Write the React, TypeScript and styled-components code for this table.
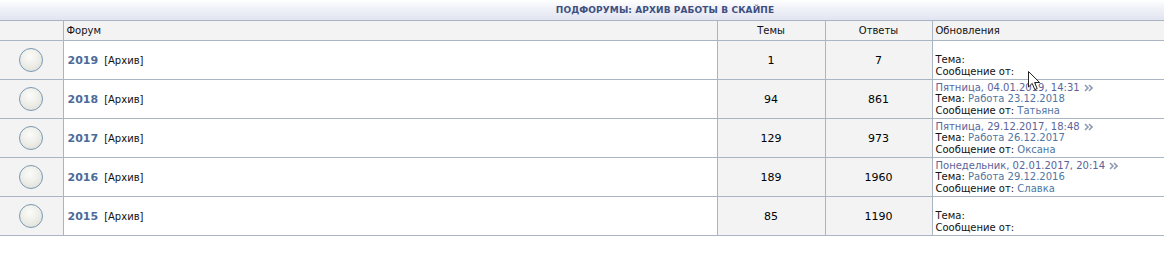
import React from 'react';
import styled, { createGlobalStyle } from 'styled-components';

const GlobalStyle = createGlobalStyle`
  html, body {
    margin: 0;
    padding: 0;
    background: #ffffff;
    overflow: hidden;
  }
  body {
    font-family: 'DejaVu Sans', Verdana, sans-serif;
    font-size: 10px;
    color: #000;
  }
`;

const Page = styled.div`
  position: relative;
  width: 1330px;
`;

const ForumTable = styled.table`
  width: 1330px;
  border-collapse: collapse;
  table-layout: fixed;
`;

const TitleCell = styled.th`
  height: 20px;
  padding: 0;
  background: linear-gradient(to bottom, #ffffff 0%, #f1f2f8 40%, #e1e4f1 100%);
  border-bottom: 1px solid #a9b5c3;
  color: #3e4f80;
  font-size: 9px;
  font-weight: bold;
  text-transform: uppercase;
  text-align: center;
  letter-spacing: 0.1px;
`;

const HeadCell = styled.th<{ $align?: string; $first?: boolean }>`
  height: 19px;
  padding: 0 3px;
  background: #f3f3f3;
  border: 1px solid #a9b5c3;
  border-left: ${({ $first }) => ($first ? 'none' : '1px solid #a9b5c3')};
  border-right: none;
  font-weight: normal;
  font-size: 10px;
  text-align: ${({ $align }) => $align || 'left'};
  color: #111;
`;

const Cell = styled.td<{ $alt?: boolean; $align?: string; $first?: boolean }>`
  height: 38px;
  padding: 0 3px;
  background: ${({ $alt }) => ($alt ? '#f3f3f3' : '#ffffff')};
  border: 1px solid #a9b5c3;
  border-left: ${({ $first }) => ($first ? 'none' : '1px solid #a9b5c3')};
  border-right: none;
  text-align: ${({ $align }) => $align || 'left'};
  vertical-align: middle;
  font-size: 11px;
`;

const StatusIcon = styled.span`
  display: inline-block;
  width: 22px;
  height: 22px;
  border-radius: 50%;
  border: 1px solid #7b99b3;
  background: radial-gradient(circle at 45% 35%, #fbfbf8 0%, #ecece7 55%, #d9d9d3 100%);
  vertical-align: middle;
`;

const YearLink = styled.a`
  color: #4b6b9a;
  font-weight: bold;
  font-size: 11px;
  text-decoration: none;
  margin-left: 1px;
`;

const Archive = styled.span`
  font-size: 10px;
  margin-left: 6px;
  color: #111;
`;

const Updates = styled.div`
  font-size: 10px;
  line-height: 11.5px;
  color: #111;
`;

const DateLink = styled.span`
  color: #5b639a;
`;

const Value = styled.span`
  color: #5076a2;
`;

const Empty = styled.div`
  height: 11.5px;
`;

const Arrow = styled.svg`
  margin-left: 4px;
  vertical-align: -1px;
`;

const Cursor = styled.svg`
  position: absolute;
  left: 1028px;
  top: 71px;
`;

type Row = {
  year: string;
  topics: number;
  replies: number;
  date?: string;
  topic?: string;
  author?: string;
};

const rows: Row[] = [
  { year: '2019', topics: 1, replies: 7 },
  { year: '2018', topics: 94, replies: 861, date: 'Пятница, 04.01.2019, 14:31', topic: 'Работа 23.12.2018', author: 'Татьяна' },
  { year: '2017', topics: 129, replies: 973, date: 'Пятница, 29.12.2017, 18:48', topic: 'Работа 26.12.2017', author: 'Оксана' },
  { year: '2016', topics: 189, replies: 1960, date: 'Понедельник, 02.01.2017, 20:14', topic: 'Работа 29.12.2016', author: 'Славка' },
  { year: '2015', topics: 85, replies: 1190 },
];

const DoubleArrow = () => (
  <Arrow width="9" height="8" viewBox="0 0 9 8">
    <path d="M1 1 L4 4 L1 7" fill="none" stroke="#8d9bb3" strokeWidth="1.6" />
    <path d="M5 1 L8 4 L5 7" fill="none" stroke="#8d9bb3" strokeWidth="1.6" />
  </Arrow>
);

const App: React.FC = () => {
  return (
    <Page>
      <GlobalStyle />
      <ForumTable>
        <colgroup>
          <col style={{ width: '63px' }} />
          <col style={{ width: '654px' }} />
          <col style={{ width: '108px' }} />
          <col style={{ width: '107px' }} />
          <col />
        </colgroup>
        <thead>
          <tr>
            <TitleCell colSpan={5}>Подфорумы: Архив работы в скайпе</TitleCell>
          </tr>
          <tr>
            <HeadCell $first />
            <HeadCell>Форум</HeadCell>
            <HeadCell $align="center">Темы</HeadCell>
            <HeadCell $align="center">Ответы</HeadCell>
            <HeadCell>Обновления</HeadCell>
          </tr>
        </thead>
        <tbody>
          {rows.map((r) => (
            <tr key={r.year}>
              <Cell $alt $first $align="center">
                <StatusIcon />
              </Cell>
              <Cell>
                <YearLink href="#">{r.year}</YearLink>
                <Archive>[Архив]</Archive>
              </Cell>
              <Cell $alt $align="center">{r.topics}</Cell>
              <Cell $alt $align="center">{r.replies}</Cell>
              <Cell>
                <Updates>
                  {r.date ? (
                    <div>
                      <DateLink>{r.date}</DateLink>
                      <DoubleArrow />
                    </div>
                  ) : (
                    <Empty />
                  )}
                  <div>
                    Тема: {r.topic && <Value>{r.topic}</Value>}
                  </div>
                  <div>
                    Сообщение от: {r.author && <Value>{r.author}</Value>}
                  </div>
                </Updates>
              </Cell>
            </tr>
          ))}
        </tbody>
      </ForumTable>
      <Cursor width="13" height="20" viewBox="0 0 13 20">
        <path d="M0.5 0.5 L0.5 16 L4.2 12.4 L6.8 18.6 L9.2 17.6 L6.6 11.5 L11.6 11.5 Z" fill="#ffffff" stroke="#222" strokeWidth="1" />
      </Cursor>
    </Page>
  );
};

export default App;
